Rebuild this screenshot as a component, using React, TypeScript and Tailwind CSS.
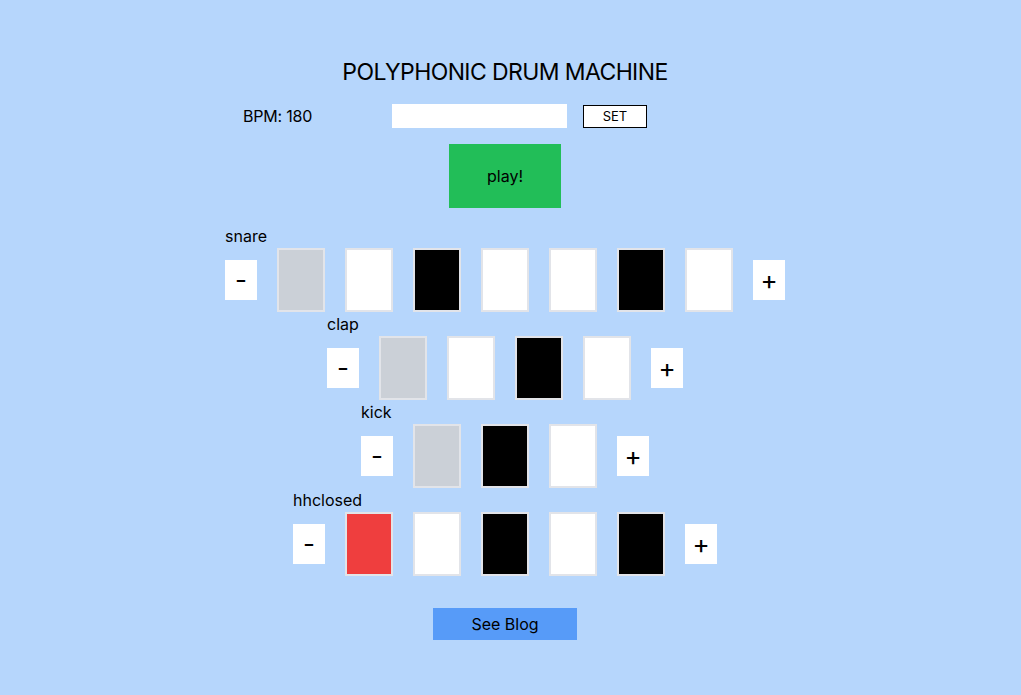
type Cell = 'on' | 'off' | 'cur' | 'hit'

const tracks: { name: string; cells: Cell[] }[] = [
  { name: 'snare', cells: ['cur', 'off', 'on', 'off', 'off', 'on', 'off'] },
  { name: 'clap', cells: ['cur', 'off', 'on', 'off'] },
  { name: 'kick', cells: ['cur', 'on', 'off'] },
  { name: 'hhclosed', cells: ['hit', 'off', 'on', 'off', 'on'] },
]

const cellColor: Record<Cell, string> = {
  on: 'bg-black',
  off: 'bg-white',
  cur: 'bg-[#cbd0d7]',
  hit: 'bg-[#ef3e3e]',
}

function Track({ name, cells }: { name: string; cells: Cell[] }) {
  return (
    <div className="mx-auto w-fit flex flex-col items-start">
      <span className="text-base leading-6">{name}</span>
      <div className="flex items-center gap-5 h-16">
        <button className="w-8 h-10 bg-white text-[26px] leading-none flex items-center justify-center">-</button>
        {cells.map((c, i) => (
          <div key={i} className={`w-12 h-16 border-2 border-[#e2e4e9] ${cellColor[c]}`} />
        ))}
        <button className="w-8 h-10 bg-white text-[26px] leading-none flex items-center justify-center">+</button>
      </div>
    </div>
  )
}

export default function App() {
  return (
    <div className="min-h-screen w-full bg-[#b6d6fc] text-black font-['Inter','Liberation_Sans',sans-serif]">
      <div className="w-[1010px] pt-14 flex flex-col">
        <h1 className="text-[23px] leading-8 text-center tracking-[-0.6px]">POLYPHONIC DRUM MACHINE</h1>

        {/* bpm controls */}
        <div className="mt-4 mx-auto w-[524px] h-6 flex items-center">
          <span className="w-[149px] text-base tracking-[-0.2px]">BPM: 180</span>
          <input className="w-[175px] h-6 bg-white outline-none" />
          <button className="ml-4 w-16 h-[23px] bg-white border border-black text-[13px] leading-none">SET</button>
        </div>

        <button className="mt-4 mx-auto w-28 h-16 bg-[#22be58] text-base">play!</button>

        <div className="mt-4 flex flex-col">
          {tracks.map((t) => (
            <Track key={t.name} name={t.name} cells={t.cells} />
          ))}
        </div>

        <button className="mt-8 mx-auto w-36 h-8 bg-[#579bf8] text-base">See Blog</button>
      </div>
    </div>
  )
}
